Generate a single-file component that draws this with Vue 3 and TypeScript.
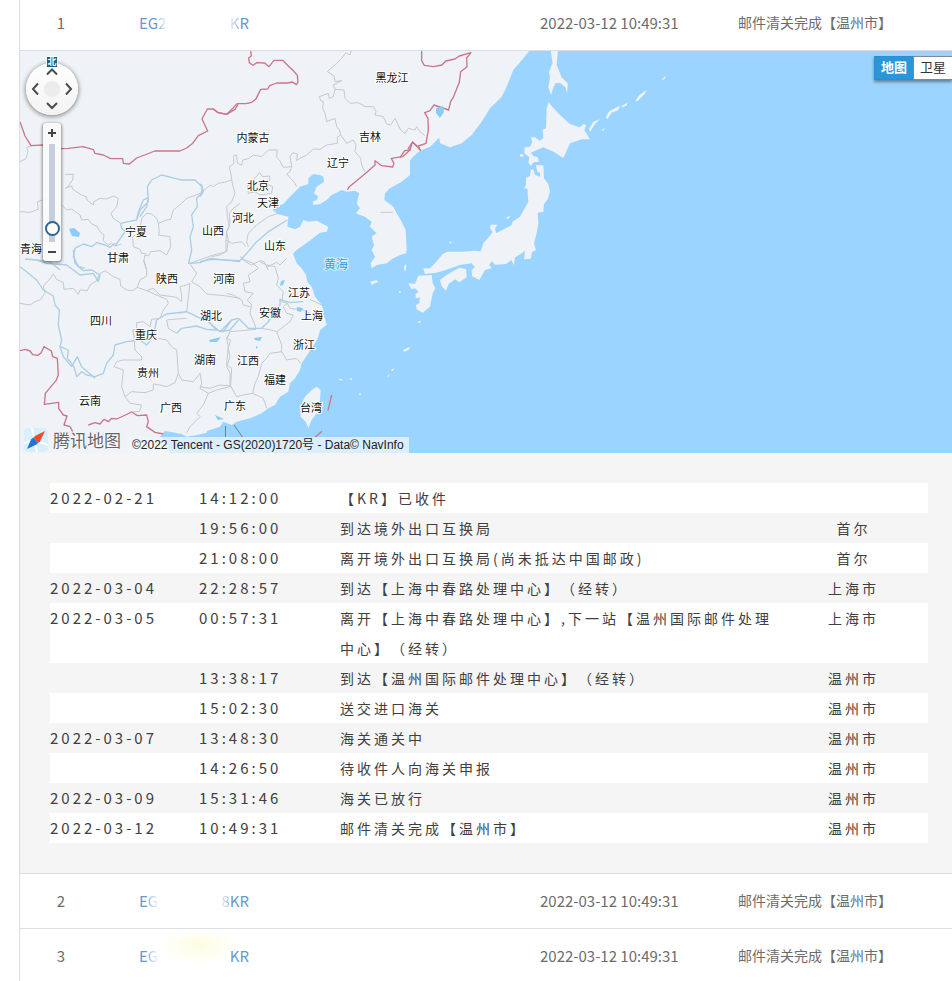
<script setup lang="ts">
import { ref } from 'vue'

interface Parcel {
  id: number
  head: string
  headFade: string
  tailFade: string
  tail: string
  time: string
  status: string
}

interface TrackEvent {
  date: string
  time: string
  text: string
  place: string
}

interface MapLabel {
  name: string
  x: number
  y: number
}

const parcels: Parcel[] = [
  { id: 1, head: 'EG', headFade: '2', tailFade: 'K', tail: 'R', time: '2022-03-12 10:49:31', status: '邮件清关完成【温州市】' },
  { id: 2, head: 'E', headFade: 'G', tailFade: '8', tail: 'KR', time: '2022-03-12 10:49:31', status: '邮件清关完成【温州市】' },
  { id: 3, head: 'E', headFade: 'G', tailFade: '', tail: 'KR', time: '2022-03-12 10:49:31', status: '邮件清关完成【温州市】' },
]

const events: TrackEvent[] = [
  { date: '2022-02-21', time: '14:12:00', text: '【KR】已收件', place: '' },
  { date: '', time: '19:56:00', text: '到达境外出口互换局', place: '首尔' },
  { date: '', time: '21:08:00', text: '离开境外出口互换局(尚未抵达中国邮政)', place: '首尔' },
  { date: '2022-03-04', time: '22:28:57', text: '到达【上海中春路处理中心】（经转）', place: '上海市' },
  { date: '2022-03-05', time: '00:57:31', text: '离开【上海中春路处理中心】,下一站【温州国际邮件处理中心】（经转）', place: '上海市' },
  { date: '', time: '13:38:17', text: '到达【温州国际邮件处理中心】（经转）', place: '温州市' },
  { date: '', time: '15:02:30', text: '送交进口海关', place: '温州市' },
  { date: '2022-03-07', time: '13:48:30', text: '海关通关中', place: '温州市' },
  { date: '', time: '14:26:50', text: '待收件人向海关申报', place: '温州市' },
  { date: '2022-03-09', time: '15:31:46', text: '海关已放行', place: '温州市' },
  { date: '2022-03-12', time: '10:49:31', text: '邮件清关完成【温州市】', place: '温州市' },
]

const labels: MapLabel[] = [
  { name: '黑龙江', x: 392, y: 82 },
  { name: '内蒙古', x: 253, y: 142 },
  { name: '吉林', x: 370, y: 141 },
  { name: '辽宁', x: 338, y: 167 },
  { name: '北京', x: 258, y: 190 },
  { name: '天津', x: 268, y: 207 },
  { name: '河北', x: 243, y: 222 },
  { name: '山西', x: 213, y: 235 },
  { name: '宁夏', x: 136, y: 236 },
  { name: '山东', x: 275, y: 250 },
  { name: '青海', x: 31, y: 253 },
  { name: '甘肃', x: 118, y: 262 },
  { name: '陕西', x: 167, y: 283 },
  { name: '河南', x: 224, y: 283 },
  { name: '江苏', x: 299, y: 297 },
  { name: '四川', x: 101, y: 325 },
  { name: '湖北', x: 211, y: 320 },
  { name: '安徽', x: 270, y: 317 },
  { name: '上海', x: 312, y: 320 },
  { name: '重庆', x: 146, y: 339 },
  { name: '浙江', x: 304, y: 349 },
  { name: '湖南', x: 205, y: 364 },
  { name: '江西', x: 248, y: 365 },
  { name: '贵州', x: 148, y: 377 },
  { name: '福建', x: 275, y: 384 },
  { name: '云南', x: 90, y: 405 },
  { name: '广西', x: 171, y: 412 },
  { name: '广东', x: 235, y: 410 },
  { name: '台湾', x: 311, y: 412 },
]

const mapType = ref<'map' | 'satellite'>('map')
const zoomLevel = ref(1)
const openId = ref(1)
</script>

<template>
  <main class="page">
    <table class="parcels">
      <colgroup>
        <col class="c-id" />
        <col />
        <col class="c-time" />
        <col class="c-status" />
      </colgroup>
      <tbody>
        <template v-for="p in parcels" :key="p.id">
          <tr class="parcel" :class="{ first: p.id === 1 }">
            <td class="id">{{ p.id }}</td>
            <td class="number">
              <a href="#" class="link" :class="{ stained: p.id === 3 }" @click.prevent="openId = p.id">
                <span>{{ p.head }}<span class="fade-right">{{ p.headFade }}</span></span>
                <span><span class="fade-left">{{ p.tailFade }}</span>{{ p.tail }}</span>
              </a>
            </td>
            <td class="time">{{ p.time }}</td>
            <td class="status">{{ p.status }}</td>
          </tr>
          <tr v-if="p.id === openId">
            <td colspan="4" class="detail">
              <div class="map">
                <svg class="canvas" viewBox="20 51 932 402" preserveAspectRatio="xMinYMin slice" aria-hidden="true">
                  <rect x="20" y="51" width="932" height="402" fill="#9bd5ff" />
                  <g fill="#eff3f7">
                    <g transform="translate(0 50) scale(.33333)">
                      <path d="M60 0H720V660H60Z" />
                    </g>
                    <g transform="translate(200 50) scale(.33333)">
                      <path d="M0 0H720V262L712 268 690 290 665 300 640 315 630 330V375L605 395 570 415 555 430 553 450 580 470 590 490 605 515 617 540 620 600 618 610 600 615 580 625 560 640 530 645 515 655 512 640 525 620 515 600 522 585 515 560 530 550 510 530 515 515 495 500 468 490 480 475 470 460 478 430 465 422 440 425 425 420 395 435 380 450 360 462 340 465 338 455 350 450 355 440 342 430 350 410 372 395 370 380 360 375 340 372 325 385 325 402 300 410 285 425 270 440 250 462 225 470 218 480 235 493 265 500 262 530 285 538 300 530 310 510 325 515 350 512 385 530 380 545 360 548 325 575 290 600 275 615 290 640 300 660H0Z" />
                    </g>
                    <g transform="translate(400 50) scale(.33333)">
                      <path d="M0 0H390L370 25 340 60 320 110 305 140 270 175 245 215 215 255 185 280 150 292 120 280 118 262 95 285 75 290 60 300 30 330V375L0 395Z" />
                      <path d="M452 0H474L470 45 485 82 503 100 502 128 496 112 482 100 468 98 460 112 453 135 445 112 450 85 447 65 458 40Z" />
                      <path d="M446 157 458 172 480 195 510 222 538 232 552 222 558 225 553 240 570 268 545 268 510 280 490 324 462 306 430 292 410 300 392 308 400 318 413 322 417 335 400 337 393 348 385 338 388 322 373 310 374 292 390 290 397 275 392 262 405 262 418 272 430 265 428 240 438 235 440 175Z" />
                      <path d="M408 346H430L432 385 445 402 450 425 443 448 432 462 430 485 413 488 415 520 410 550 402 580 408 600 396 606 392 626 372 628 375 602 362 612 345 622 342 645 334 630 318 642 285 644 275 634 268 645 275 655 255 660 238 690 216 678 215 660 225 652 215 640 180 645 152 655 130 662 108 668 92 670 75 672 70 655 90 655 105 640 128 612 142 605H190L222 602 242 604 250 580 272 555 278 546 270 535 272 524 292 524 285 535 288 550 335 525 338 515 360 500 385 455 382 415 372 416 378 405 378 384 390 378 392 360 400 358 405 375 420 380 420 368 412 365Z" />
                      <path d="M165 660 180 653 198 658 200 682 178 697 165 688 146 702 138 722 125 708 120 690 140 675Z" />
                      <path d="M55 677 95 675 98 700 106 715 98 730 90 770 68 788 50 778 48 765 58 760 60 742 48 745 46 732 56 725 45 715 35 718 25 700 45 702Z" />
                      <path d="M567 238 580 215 600 208 585 222 570 245ZM617 202 628 184 650 172 660 166 655 180 635 188 622 208ZM665 168 682 158 680 166 666 173ZM706 152 718 135 740 120 734 132 712 154ZM783 90 797 78 795 86ZM605 240 614 233 610 242ZM318 502 330 498 325 508ZM148 575H154V580H148ZM16 645 19 645 17 662 13 660ZM360 313H370V320H360Z" />
                    </g>
                    <g transform="translate(200 250) scale(.33333)">
                      <path d="M335 420 350 410 362 420 360 450 350 490 335 510 325 535 317 515 302 500 300 470 315 440ZM510 95 530 90 534 96 515 104ZM612 50 618 42 616 65ZM597 123H602V128H597ZM652 215 663 212 660 220ZM610 300 630 290 625 300 612 306ZM572 360 583 355 578 364ZM415 388 427 386 424 393ZM446 386 457 384 455 390ZM476 430 484 430 480 438ZM562 378 570 372 565 382Z" />
                      <path d="M0 0H275L290 40 305 55 318 75 322 95 335 110 345 140 365 165 370 180 355 190 375 205 380 225 360 240 355 260 345 280 325 310 305 340 300 360 285 385 270 400 265 425 240 440 225 465 205 475 185 490 150 505 110 515 95 525 70 515 60 530 30 540 0 550Z" />
                    </g>
                    <g transform="translate(0 250) scale(.33333)">
                      <path d="M60 0H620V548L590 555 560 560 545 552 525 548 495 543 480 560 500 575 510 610H60Z" />
                    </g>
                  </g>
                  <g fill="none" stroke-linejoin="round">
                    <!-- province borders -->
                    <g stroke="#c3c9ce" stroke-width="3">
                      <g transform="translate(0 50) scale(.33333)">
                        <path d="M60 335 78 326 84 305 80 292 95 288M60 485 90 487 115 478 112 455 128 450M195 415 215 408 218 418 245 435 258 440 263 452 280 465 282 455 300 445 320 447 340 438 355 445 350 470 333 490 340 505 362 520M185 465 200 480 215 477 240 495 245 510 265 508 275 522 290 528 300 545 312 555 310 572 325 585 335 580 345 588 365 582M195 373H220L218 390 200 415M440 490 455 492 470 505 475 520 500 510 512 508 520 480 545 460 560 445 590 435 600 430 632 405 640 410 655 400 680 395 695 390M475 520 478 545 475 555 510 560 512 590 500 615 480 602 452 605 445 618 435 615 432 630 440 660M440 490 425 505 420 540 398 562 400 590 420 598 425 610 440 612M720 460 700 475 688 490 690 520 680 545 685 570 680 605 640 615 570 640" />
                      </g>
                      <g transform="translate(200 50) scale(.33333)">
                        <path d="M455 0 450 15 437 8 425 25 410 40 382 65 402 78 405 95 425 92 400 105 405 118 432 120 435 145 450 160 475 158 495 170 520 170 528 185 525 195 550 200 560 222 572 225 585 205 602 240 615 250 625 235 645 240 650 230 660 245 675 257M405 118 400 140 388 145 385 130 358 140 362 152 370 155 368 175 375 190 380 215 405 205 410 230 418 240 422 255 412 262 412 280 380 285 360 298 340 297 320 315 300 325 290 332 292 312 278 308 270 320 275 350 250 352 238 330 230 322 232 300 205 300 185 320 160 315 148 325 128 330 125 345 112 340 110 315 100 318 102 340 88 350 93 375 98 405 105 430 95 455 80 470 82 500 88 530 80 545 78 570 95 580 125 575 138 590M422 255 440 280 460 270 468 285 465 305 482 325 485 345 495 367M275 350 270 365 260 372 275 388 285 400 290 410M150 400 165 385 178 368 188 380 208 378 210 390 200 402 218 410 215 430 180 435 165 425 145 430 142 410ZM235 490 205 500 170 525 145 550 140 575 145 590M78 570 78 605 60 615 35 620M125 627 145 640 155 645 180 632 192 635 205 660M200 652 230 637 240 645 260 625" />
                        <path d="M542 487H578" />
                      </g>
                      <g transform="translate(0 250) scale(.33333)">
                        <path d="M60 160 90 165 105 155 120 150 135 130 130 108 145 92 160 72 170 88 190 98 192 118 220 115 235 133 240 120 262 122 270 105 290 92 298 72 315 62 340 80 360 88 362 108 380 120 398 122 412 112 440 122 500 148 505 160 490 180 480 205 455 208 450 230 430 215 410 218 410 238 398 240 402 258 430 265 455 262 500 270 515 290 530 300M412 112 420 90 440 78 440 60 430 30M440 122 460 115 480 135 530 142 545 155 545 135 540 110 560 105 570 100 560 185 535 190M720 145 680 138 620 132 600 110 575 95 590 70 570 42M402 258 405 300 425 320 425 330 370 330 350 335 342 350 370 360 365 410 375 440 395 425 435 428 460 420 460 402 480 405 500 410 525 398 535 370 530 300M375 440 390 460 425 465 418 485 400 485M535 370 545 390 580 395 600 370 605 400 600 415 625 430 650 420 690 410 690 370 680 350 690 320 685 295 692 270 680 265 690 245M625 430 610 465 590 490 600 500 570 530 560 548M500 210 520 208 560 205M500 210 505 235 530 250" />
                      </g>
                      <g transform="translate(200 250) scale(.33333)">
                        <path d="M120 20 135 30 160 40 175 55 145 75 150 95 130 100 135 125 160 130 142 150 155 165 150 190 165 225 168 238 125 242 90 245 80 268 85 290 80 345 95 355 92 408 60 405 30 415 0 410M180 35 200 45 225 50 235 85 230 105 250 125 245 155 262 160 270 175 310 180 330 190M262 160 250 170 260 190 280 195 270 215 245 235 230 245 205 238 180 235M230 245 245 285 245 305 210 310 200 325 185 340 175 380 165 400 158 430 130 435 110 440 92 408M245 305 260 330 290 325 302 340M158 430 190 445 200 475M80 130 100 135 125 150 130 165 150 170M330 148 365 165" />
                      </g>
                    </g>
                    <!-- rivers -->
                    <g stroke="#abcde5" stroke-width="4">
                      <g transform="translate(0 50) scale(.33333)">
                        <path d="M362 520 385 515 410 510 420 480 445 455 442 410 455 390 485 375 525 385 545 390 585 390 606 410 605 430 590 445 592 470 575 495 580 530 570 560 575 600 566 640 600 638 630 625 720 635M362 520 365 535 375 545 345 588M410 505 418 478 430 450 445 443 440 470 420 500M75 627 110 630 150 635 180 660M255 655 235 650 220 620 225 595 250 582 275 590 290 578 315 585 330 592 345 580" />
                      </g>
                      <g transform="translate(200 50) scale(.33333)">
                        <path d="M0 635 35 628 120 632 140 610 170 575 205 545 262 510M0 440 10 425 5 405 0 402" />
                      </g>
                      <g transform="translate(0 250) scale(.33333)">
                        <path d="M60 50 85 70 110 90 130 120 160 138 165 165 178 180 175 225 185 270 180 290 205 300 202 325 222 350 230 380 245 365 260 375 285 380 310 370 320 340 340 315 345 285 380 275 420 270 440 285 460 260 470 210 500 192 560 185 590 200 625 215 660 245 690 240 715 210M110 30 140 40 200 45 240 75 280 70 295 95 300 75 275 60 250 62 225 40 220 0M180 290 190 320 215 350 232 320 245 350 285 385M530 250 545 235 590 228 620 238 650 240" />
                      </g>
                      <g transform="translate(200 250) scale(.33333)">
                        <path d="M0 190 30 220 50 240 70 245 95 210 115 205 145 235 185 235 205 215 240 165 240 148 270 158 310 155M95 210 60 245" />
                      </g>
                    </g>
                    <!-- national borders -->
                    <g stroke="#ce7487" stroke-width="4">
                      <g transform="translate(0 50) scale(.33333)">
                        <path d="M60 215 75 258 93 287 130 285M183 296 205 295 250 290 280 299 285 310 310 315 332 326 368 326 370 340 388 342 410 324 465 303H540L560 294 578 280 595 257 623 243 606 207 622 177 640 177 654 188 680 193 705 178 714 163" />
                      </g>
                      <g transform="translate(200 50) scale(.33333)">
                        <path d="M152 3 154 17 146 24 148 38 159 46 170 38 194 39 207 50 222 31 248 31 267 50 278 60 292 76 294 97 289 104 277 96 263 99 230 99 209 107 203 117 182 118 167 148 155 157 138 161 111 161 100 173 80 193 54 187 40 177M442 420 448 410 497 370 525 345 525 332 545 347 578 351 582 340 574 325 608 320 630 300 625 295 638 276 662 302" />
                      </g>
                      <g transform="translate(400 50) scale(.33333)">
                        <path d="M65 3V32L73 46 100 50 126 45 137 33 165 27 178 18 213 8 200 24 201 50 182 65 178 97 160 142 152 154 146 180 102 165 90 182 74 188 84 205 85 240 78 280 55 288 61 301M0 323 14 302 30 300 37 277 52 288" />
                      </g>
                      <g transform="translate(0 250) scale(.33333)">
                        <path d="M60 302 76 298 90 303 98 314 113 316 123 309 132 290 154 303 158 320 172 325 175 375 168 392 136 430 133 463 176 457 176 475 190 495 201 498 192 525 210 530 218 545M265 525 285 518 300 522 312 508 325 515 335 505 350 507 370 498 395 486 412 497 440 495 445 515 440 530 465 547 490 552" />
                      </g>
                      <g transform="translate(200 250) scale(.33333)">
                        <path d="M395 435 384 482M366 544 345 562" />
                      </g>
                    </g>
                    <path d="M225.500 437V426M234 425 243 438" stroke="#6d7f8e" stroke-width="1" />
                  </g>
                  <!-- lakes -->
                  <g fill="#8dccf2">
                    <path d="M69 229 74 228 80 233 79 237 72 236ZM436 108 443 106 444 112 440 118 436 113ZM437 109 444 107 443 114ZM281 281 285 280 283 285 280 286ZM297 307 303 308 301 312 297 311ZM254 338 262 337 260 341 255 340ZM209 340 221 337 217 342 210 342ZM256 346 258 347 256 349ZM215 415 224 419 218 420Z" />
                  </g>
                  <g class="place">
                    <text v-for="l in labels" :key="l.name" :x="l.x" :y="l.y">{{ l.name }}</text>
                  </g>
                  <text class="sea" x="336" y="269">黄海</text>
                </svg>

                <div class="compass">
                  <span class="north">北</span>
                  <svg viewBox="0 0 52 52" width="52" height="52" aria-hidden="true">
                    <defs>
                      <linearGradient id="dial" x1="0" y1="0" x2="0" y2="1">
                        <stop offset="0" stop-color="#ffffff" />
                        <stop offset="1" stop-color="#f3f3f3" />
                      </linearGradient>
                    </defs>
                    <circle cx="26" cy="26" r="26" fill="url(#dial)" />
                    <circle cx="26" cy="26" r="8" fill="#ececec" />
                    <path d="M21 11.500 26 6.500 31 11.500M21 40 26 45 31 40M12 20.500 7 26 12 31.500M40 20.500 45 26 40 31.500" fill="none" stroke="#4c4c4c" stroke-width="2" />
                  </svg>
                </div>

                <div class="zoom">
                  <button type="button" aria-label="放大" @click="zoomLevel++">
                    <svg viewBox="0 0 10 10" width="10" height="10"><path d="M1 5H9M5 1V9" stroke="#444" stroke-width="2" /></svg>
                  </button>
                  <input v-model.number="zoomLevel" type="range" min="0" max="14" aria-label="缩放级别" />
                  <button type="button" aria-label="缩小" @click="zoomLevel--">
                    <svg viewBox="0 0 10 10" width="10" height="10"><path d="M1 5H9" stroke="#444" stroke-width="2" /></svg>
                  </button>
                </div>

                <div class="types">
                  <button type="button" :class="{ on: mapType === 'map' }" @click="mapType = 'map'">地图</button>
                  <button type="button" :class="{ on: mapType === 'satellite' }" @click="mapType = 'satellite'">卫星</button>
                </div>

                <div class="credit">
                  <span class="brand">
                    <svg viewBox="0 0 24 24" width="24" height="24" aria-hidden="true">
                      <rect width="24" height="24" rx="4" fill="#d9effb" />
                      <path d="M0 15 10 12 24 17M8 0 13 24" stroke="#fff" stroke-width="2" fill="none" />
                      <path d="M21 3 16 13.500 14 15 9.500 9.500 11 8Z" fill="#ee4c2c" />
                      <path d="M3 21 7 11.500 9.500 9.500 14 15 12.500 16.500Z" fill="#1f76d8" />
                    </svg>
                    腾讯地图
                  </span>
                  <span class="copy">©2022 Tencent - GS(2020)1720号 - Data© NavInfo</span>
                </div>
              </div>

              <div class="history">
                <table class="events">
                  <colgroup>
                    <col class="e-date" />
                    <col class="e-time" />
                    <col />
                    <col class="e-place" />
                  </colgroup>
                  <tbody>
                    <tr v-for="e in events" :key="e.date + e.time">
                      <td class="num">{{ e.date }}</td>
                      <td class="num">{{ e.time }}</td>
                      <td>{{ e.text }}</td>
                      <td class="where">{{ e.place }}</td>
                    </tr>
                  </tbody>
                </table>
              </div>
            </td>
          </tr>
        </template>
      </tbody>
    </table>
  </main>
</template>

<style>
body {
  background: #fff;
  overflow: hidden;
}
</style>

<style scoped>
.page {
  padding-left: 19px;
  font-family: 'Noto Sans CJK SC', 'Noto Sans', sans-serif;
  font-size: 14px;
  color: #6c6c6c;
  text-spacing-trim: space-all;
}

table {
  width: 100%;
  table-layout: fixed;
  border-collapse: separate;
  border-spacing: 0;
}

td {
  padding: 0;
  box-sizing: border-box;
}

.parcels {
  border-left: 1px solid #d9dfe2;
}

.c-id { width: 82px; }
.c-time { width: 198px; }
.c-status { width: 214px; }

.parcel td {
  height: 55px;
  padding-bottom: 2px;
  border-bottom: 1px solid #dcdfe1;
}

.parcel.first td {
  height: 51px;
  padding-bottom: 6px;
}

.id {
  text-align: center;
}

.id,
.number,
.time {
  font-size: 15px;
}

.parcel td.number {
  padding-left: 37px;
}

.link {
  display: flex;
  justify-content: space-between;
  width: 110px;
  color: #6699d0;
  text-decoration: none;
}

.stained {
  padding: 12px 0;
  background: radial-gradient(ellipse 40px 20px at 60px 12px, #fdfde2, transparent);
}

.fade-right,
.fade-left {
  color: transparent;
  background: linear-gradient(90deg, #8fb4de, #f2f7fc);
  background-clip: text;
}

.fade-left {
  background: linear-gradient(90deg, #e4edf7, #8fb4de);
  background-clip: text;
}

.detail {
  border-bottom: 1px solid #d8dbdd;
}

.map {
  position: relative;
  height: 402px;
  overflow: hidden;
}

.canvas {
  display: block;
  width: 100%;
  height: 100%;
}

.place text,
.sea {
  text-anchor: middle;
  font-size: 11px;
  fill: #111;
  stroke: #fff;
  stroke-width: 2px;
  paint-order: stroke;
}

.sea {
  font-size: 12px;
  fill: #3d9ad2;
  stroke: #d5eefc;
}

.compass {
  position: absolute;
  left: 6px;
  top: 12px;
  width: 52px;
  height: 52px;
  border-radius: 50%;
  box-shadow: 0 1px 4px 1px rgba(0, 0, 0, 0.4);
}

.compass svg {
  display: block;
}

.north {
  position: absolute;
  left: 20px;
  top: -7px;
  width: 10px;
  height: 10px;
  background: #1b6278;
  border: 1px solid #fff;
  color: #fff;
  font-size: 9px;
  font-weight: 700;
  line-height: 10px;
  text-align: center;
}

.zoom {
  position: absolute;
  left: 23px;
  top: 72px;
  display: flex;
  flex-direction: column;
  align-items: center;
  width: 18px;
  height: 138px;
  background: #fafafa;
  border-radius: 3px;
  box-shadow: 0 1px 3px 1px rgba(0, 0, 0, 0.4);
}

.zoom button {
  display: flex;
  align-items: center;
  justify-content: center;
  width: 18px;
  height: 19px;
  padding: 0;
  border: 0;
  background: none;
}

.zoom input {
  flex: 1;
  min-height: 0;
  width: 16px;
  margin: 2px 0 0;
  writing-mode: vertical-lr;
  direction: rtl;
  appearance: none;
  background: linear-gradient(#c6cddb, #c6cddb) center / 6px 100% no-repeat;
}

.zoom input::-webkit-slider-thumb {
  appearance: none;
  width: 15px;
  height: 15px;
  border: 2px solid #2f6390;
  border-radius: 50%;
  background: #fff;
}

.types {
  position: absolute;
  right: 0;
  top: 5px;
  display: flex;
  height: 24px;
  box-shadow: 0 2px 3px rgba(0, 0, 0, 0.4);
}

.types button {
  width: 39px;
  padding: 0 0 2px;
  border: 1px solid #7d8a93;
  border-width: 1px 0 1px 1px;
  background: #fff;
  color: #333;
  font-family: inherit;
  font-size: 13px;
  line-height: 20px;
}

.types .on {
  border-color: #2a8ed2;
  background: #2b95da;
  color: #fff;
  font-weight: 700;
}

.credit {
  position: absolute;
  left: 4px;
  bottom: 0;
  display: flex;
  align-items: flex-end;
  gap: 6px;
}

.brand {
  display: flex;
  align-items: center;
  gap: 5px;
  height: 26px;
  font-size: 17px;
  line-height: 26px;
  color: #666;
  text-shadow: 0 0 2px #fff, 0 0 2px #fff;
}

.copy {
  padding: 0 5px;
  background: rgba(240, 246, 251, 0.75);
  color: #222;
  font-family: 'Liberation Sans', 'Noto Sans CJK SC', sans-serif;
  font-size: 12px;
  line-height: 16px;
  white-space: nowrap;
}

.history {
  padding: 30px 24px 30px 30px;
  background: #f5f5f5;
}

.events {
  letter-spacing: 3px;
  line-height: 30px;
  color: #404040;
}

.e-date { width: 149px; }
.e-time { width: 141px; }
.e-place { width: 149px; }

.events tr:nth-child(odd) {
  background: #fff;
}

.events tr:nth-child(even) {
  background: #f5f5f5;
}

.events td {
  vertical-align: top;
}

.num {
  font-size: 15px;
}

.where {
  text-align: center;
}
</style>
